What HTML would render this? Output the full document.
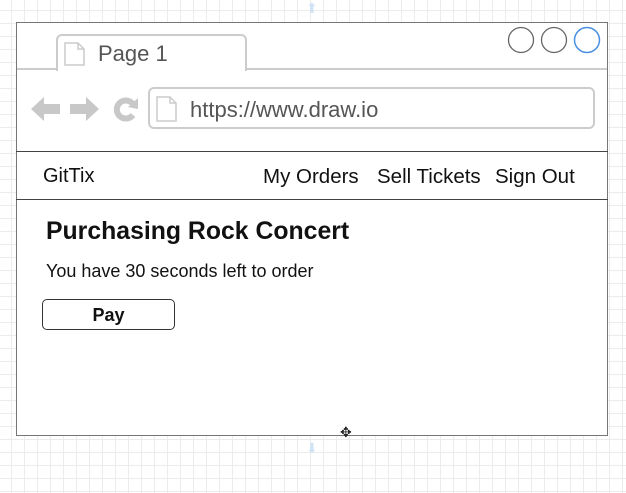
<!DOCTYPE html>
<html><head><style>
*{margin:0;padding:0;box-sizing:border-box}
body{width:626px;height:493px;overflow:hidden;position:relative;font-family:"Liberation Sans",Arial,sans-serif;
background-color:#fff;
background-image:linear-gradient(#ececec 1px,transparent 1px),linear-gradient(90deg,#ececec 1px,transparent 1px);
background-size:13px 13px;background-position:-2px -3px}
.a{position:absolute;white-space:nowrap}
</style></head><body>
<div class="a" style="left:16px;top:22px;width:592px;height:414px;background:#fff;border:1px solid #777"></div>
<div class="a" style="left:17px;top:68px;width:590px;height:2px;background:#ccc"></div>
<div class="a" style="left:56px;top:34px;width:191px;height:37px;background:#fff;border:2px solid #ccc;border-bottom:none;border-radius:6px 6px 0 0"></div>
<svg class="a" style="left:64px;top:42px" width="22" height="24"><path d="M1 1H14L20 7V23H1Z M14 1V7H20" fill="#fff" stroke="#ccc" stroke-width="1.5"/></svg>
<div class="a" style="left:98px;top:41px;font-size:22px;color:#555">Page 1</div>
<svg class="a" style="left:505px;top:26px" width="100" height="30">
<circle cx="16" cy="14" r="12.5" fill="none" stroke="#666" stroke-width="1.3"/>
<circle cx="49" cy="14" r="12.5" fill="none" stroke="#666" stroke-width="1.3"/>
<circle cx="82" cy="14" r="12.5" fill="none" stroke="#4a90e2" stroke-width="1.5"/></svg>
<svg class="a" style="left:30px;top:93px" width="110" height="32">
<path d="M1 16L14 4V11H30V21H14V28Z" fill="#c8c8c8"/>
<path d="M99 16L86 4V11H70V21H86V28Z" transform="translate(-30 0)" fill="#c8c8c8"/>
<path d="M102.5 10.5A9 9 0 1 0 103 22" fill="none" stroke="#c8c8c8" stroke-width="6"/>
<path d="M98 14L108 5V16Z" fill="#c8c8c8"/>
</svg>
<div class="a" style="left:148px;top:87px;width:447px;height:42px;border:2px solid #ccc;border-radius:6px;background:#fff"></div>
<svg class="a" style="left:156px;top:96px" width="22" height="26"><path d="M1 1H14L20 7V25H1Z M14 1V7H20" fill="#fff" stroke="#ccc" stroke-width="1.5"/></svg>
<div class="a" style="left:190px;top:97px;font-size:22px;color:#555">https://www.draw.io</div>
<div class="a" style="left:16px;top:151px;width:592px;height:49px;border-top:1.5px solid #444;border-bottom:1.5px solid #444"></div>
<div class="a" style="left:43px;top:165px;font-size:20px;color:#111">GitTix</div>
<div class="a" style="left:263px;top:165px;font-size:20.5px;color:#111">My Orders</div>
<div class="a" style="left:377px;top:165px;font-size:20.5px;color:#111">Sell Tickets</div>
<div class="a" style="left:495px;top:165px;font-size:20.5px;color:#111">Sign Out</div>
<div class="a" style="left:46px;top:218px;font-size:24.8px;font-weight:bold;color:#111">Purchasing Rock Concert</div>
<div class="a" style="left:46px;top:261px;font-size:18px;color:#111">You have 30 seconds left to order</div>
<div class="a" style="left:42px;top:299px;width:133px;height:31px;border:1.5px solid #333;border-radius:5px;text-align:center;line-height:30px;font-size:18px;font-weight:bold;color:#111">Pay</div>
<div class="a" style="left:340px;top:424px;font-size:14px;color:#222">✥</div>
<div class="a" style="left:306px;top:0px;font-size:14px;color:#cfe3f7">⬆</div>
<div class="a" style="left:306px;top:440px;font-size:14px;color:#cfe3f7">⬇</div>
</body></html>
